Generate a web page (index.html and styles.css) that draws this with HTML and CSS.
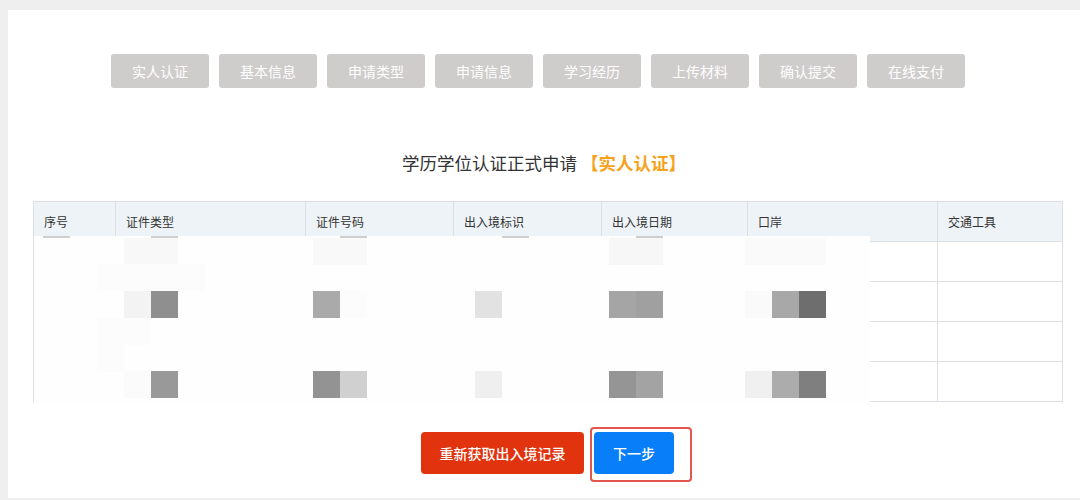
FILE: index.html
```html
<!DOCTYPE html>
<html>
<head>
    <meta charset="utf-8">
    <title>学历学位认证正式申请</title>
    <link rel="stylesheet" href="styles.css">
</head>
<body>
    <div class="page">
        <div class="steps">
            <span class="step">实人认证</span>
            <span class="step">基本信息</span>
            <span class="step">申请类型</span>
            <span class="step">申请信息</span>
            <span class="step">学习经历</span>
            <span class="step">上传材料</span>
            <span class="step">确认提交</span>
            <span class="step">在线支付</span>
        </div>

        <h2 class="title">学历学位认证正式申请 <span class="title-tag">【实人认证】</span></h2>

        <div class="table-wrap">
            <table class="records">
                <thead>
                    <tr>
                        <th class="col-no">序号</th>
                        <th class="col-type">证件类型</th>
                        <th class="col-num">证件号码</th>
                        <th class="col-flag">出入境标识</th>
                        <th class="col-date">出入境日期</th>
                        <th class="col-port">口岸</th>
                        <th class="col-tool">交通工具</th>
                    </tr>
                </thead>
                <tbody>
                    <tr><td></td><td></td><td></td><td></td><td></td><td></td><td></td></tr>
                    <tr><td></td><td></td><td></td><td></td><td></td><td></td><td></td></tr>
                    <tr><td></td><td></td><td></td><td></td><td></td><td></td><td></td></tr>
                    <tr><td></td><td></td><td></td><td></td><td></td><td></td><td></td></tr>
                </tbody>
            </table>

            <!-- 打码遮挡 -->
            <div class="mosaic">
                <i class="stub s1"></i><i class="stub s2"></i><i class="stub s3"></i><i class="stub s4"></i><i class="stub s5"></i>
                <i class="px a1"></i><i class="px a2"></i><i class="px a3"></i><i class="px a4"></i>
                <i class="px b1"></i>
                <i class="px c1"></i><i class="px c2"></i><i class="px c3"></i><i class="px c4"></i><i class="px c5"></i>
                <i class="px c6"></i><i class="px c7"></i><i class="px c8"></i><i class="px c9"></i><i class="px c10"></i>
                <i class="px d1"></i><i class="px e1"></i>
                <i class="px f1"></i><i class="px f2"></i><i class="px f3"></i><i class="px f4"></i><i class="px f5"></i>
                <i class="px f6"></i><i class="px f7"></i><i class="px f8"></i><i class="px f9"></i><i class="px f10"></i>
            </div>
        </div>

        <div class="actions">
            <button class="btn btn-red">重新获取出入境记录</button>
            <span class="marked">
                <button class="btn btn-blue">下一步</button>
            </span>
        </div>
    </div>
</body>
</html>
```

FILE: styles.css
```css
body {
    margin: 0;
    background: #efefef;
    font-family: "Noto Sans CJK SC", "Noto Sans", sans-serif;
}
.page {
    margin: 10px 0 0 8px;
    height: 488px;
    background: #fff;
    padding-top: 44px;
    box-sizing: border-box;
}
.steps {
    display: flex;
    gap: 10px;
    padding-left: 103px;
}
.step {
    width: 98px;
    height: 34px;
    line-height: 34px;
    text-align: center;
    background: #cfcccc;
    color: #fff;
    font-size: 14px;
    border-radius: 3px;
}
.title {
    margin: 63px 0 0;
    height: 24px;
    line-height: 24px;
    text-align: center;
    font-size: 17.5px;
    font-weight: 400;
    color: #333;
}
.title-tag {
    color: #f5a21c;
    font-weight: 700;
}
.table-wrap {
    position: relative;
    margin: 26px 18px 0 25px;
}
.records {
    width: 1029px;
    border-collapse: collapse;
    table-layout: fixed;
}
.records th,
.records td {
    border: 1px solid #dcdfe4;
    height: 40px;
    padding: 0 0 0 10px;
    box-sizing: border-box;
    text-align: left;
}
.records th {
    background: #eef3f8;
    font-size: 12px;
    font-weight: 400;
    color: #333;
}
.col-no { width: 82px; }
.col-type { width: 190px; }
.col-num { width: 148px; }
.col-flag { width: 148px; }
.col-date { width: 146px; }
.col-port { width: 190px; }
.col-tool { width: 125px; }

/* 打码区域 */
.mosaic {
    position: absolute;
    left: 1px;
    top: 35px;
    width: 836px;
    height: 167px;
    background: #fefefe;
}
.mosaic i {
    position: absolute;
    width: 27px;
    height: 27px;
}
.mosaic .stub {
    height: 2px;
    top: 0;
    background: #cfcfcf;
}
.s1 { left: 9px; }
.s2 { left: 117px; }
.s3 { left: 306px; }
.s4 { left: 468px; }
.s5 { left: 602px; }
.a1 { left: 90px; top: 2px; width: 54px !important; background: #f8f8f8; }
.a2 { left: 279px; top: 2px; width: 54px !important; background: #f9f9f9; }
.a3 { left: 575px; top: 2px; width: 54px !important; background: #f7f7f7; }
.a4 { left: 711px; top: 2px; width: 81px !important; background: #fafafa; }
.b1 { left: 63px; top: 28px; width: 108px !important; background: #fcfcfc; }
.c1 { left: 90px; top: 55px; background: #f3f3f3; }
.c2 { left: 117px; top: 55px; background: #8f8f8f; }
.c3 { left: 279px; top: 55px; background: #aaa; }
.c4 { left: 306px; top: 55px; background: #fcfcfc; }
.c5 { left: 441px; top: 55px; background: #e2e2e2; }
.c6 { left: 575px; top: 55px; background: #a5a5a5; }
.c7 { left: 602px; top: 55px; background: #a0a0a0; }
.c8 { left: 711px; top: 55px; background: #fafafa; }
.c9 { left: 738px; top: 55px; background: #a8a8a8; }
.c10 { left: 765px; top: 55px; background: #6e6e6e; }
.d1 { left: 63px; top: 82px; width: 54px !important; background: #fcfcfc; }
.e1 { left: 63px; top: 109px; background: #fcfcfc; }
.f1 { left: 90px; top: 135px; background: #fbfbfb; }
.f2 { left: 117px; top: 135px; background: #999; }
.f3 { left: 279px; top: 135px; background: #939393; }
.f4 { left: 306px; top: 135px; background: #d0d0d0; }
.f5 { left: 441px; top: 135px; background: #efefef; }
.f6 { left: 575px; top: 135px; background: #959595; }
.f7 { left: 602px; top: 135px; background: #a3a3a3; }
.f8 { left: 711px; top: 135px; background: #f0f0f0; }
.f9 { left: 738px; top: 135px; background: #acacac; }
.f10 { left: 765px; top: 135px; background: #7f7f7f; }

.actions {
    display: flex;
    justify-content: center;
    gap: 10px;
    margin-top: 30px;
    padding-left: 7px;
}
.btn {
    height: 42px;
    border: none;
    border-radius: 4px;
    color: #fff;
    font-family: inherit;
    font-size: 14px;
    font-weight: 500;
    cursor: pointer;
}
.btn-red {
    width: 163px;
    background: #e2330f;
}
.btn-blue {
    width: 80px;
    background: #087ef9;
}
.marked {
    position: relative;
    display: flex;
}
.marked::after {
    content: "";
    position: absolute;
    left: -4px;
    right: -18px;
    top: -5px;
    bottom: -8px;
    border: 2px solid #e2564e;
    border-radius: 4px;
}
```
